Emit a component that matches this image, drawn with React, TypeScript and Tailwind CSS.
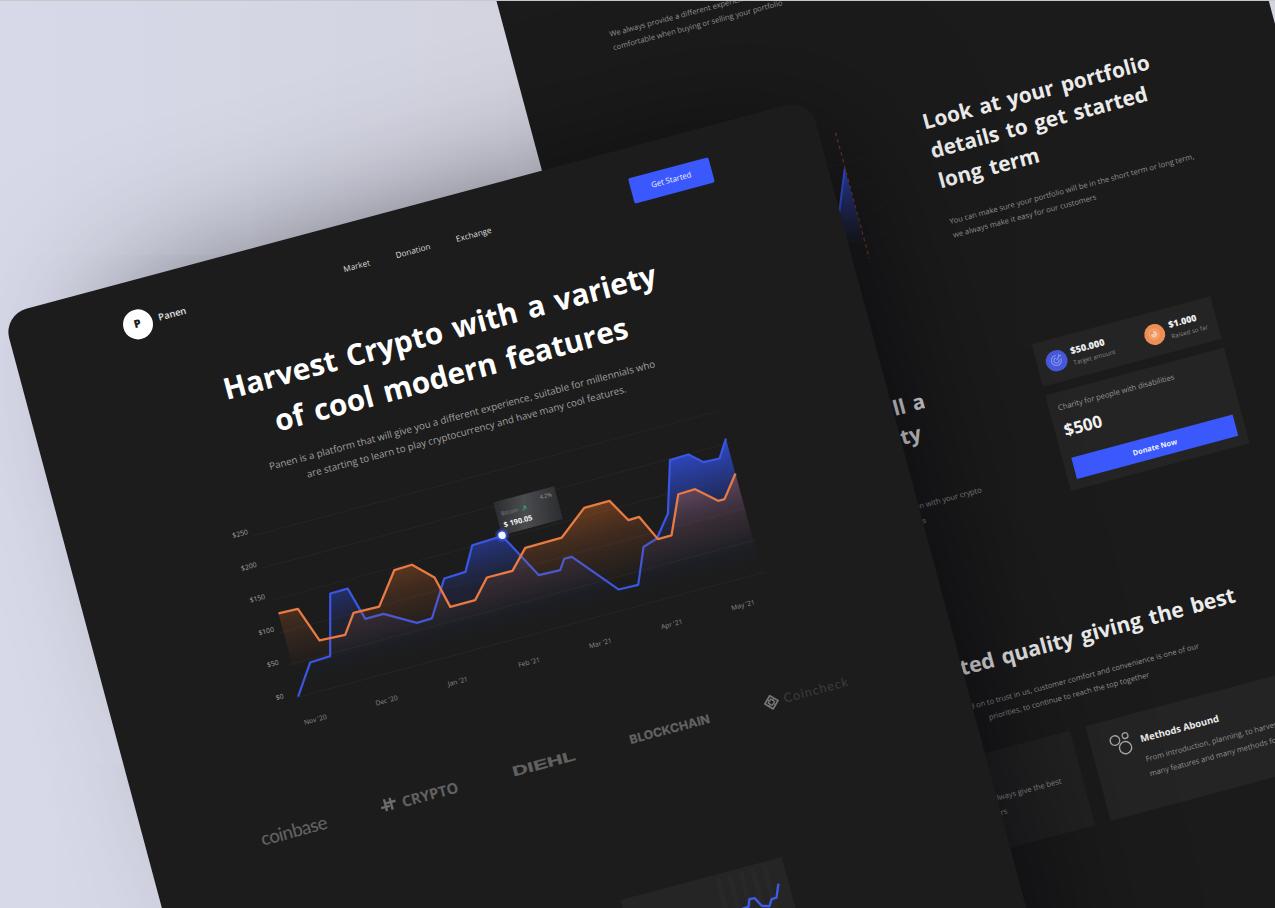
import React from 'react';

type Point = [number, number];

const BITCOIN: Point[] = [
  [2.3, 167], [22.8, 137.1], [43.7, 136.2], [60, 75.7], [78.2, 75.5], [87.3, 109.3], [106.2, 109.2],
  [136.1, 126.5], [151.8, 126.1], [174, 90.7], [196.2, 89.8], [209.7, 65.8], [241, 64.6], [266.3, 112],
  [288.2, 112.7], [295.1, 102.7], [302.9, 102.9], [339.5, 146.4], [359.7, 147.1], [374.7, 111.8],
  [389.8, 107.1], [406.9, 85.8], [422.7, 34.8], [442, 34.1], [454.5, 45.4], [471, 46.1], [482.3, 28.5],
];

const ETHEREUM: Point[] = [
  [4.9, 81.6], [24.8, 82.1], [37.5, 118.3], [63.7, 119.6], [77.5, 100.4], [103.9, 101], [127.9, 69.8],
  [146.4, 69.1], [164.9, 87.2], [172.5, 119.7], [198.3, 119.6], [215.5, 100.8], [241.9, 101],
  [260.2, 82.1], [298.2, 81.6], [327.5, 58.7], [353.7, 58.5], [367.1, 82.1], [378.3, 81.7],
  [390.6, 108], [404.7, 107.9], [421.9, 69.9], [439.5, 69.4], [458.7, 86.6], [465.3, 86.6], [482.5, 64.7],
];

const Y_LABELS = ['$250', '$200', '$150', '$100', '$50', '$0'];
const X_LABELS = ["Nov '20", "Dec '20", "Jan '21", "Feb '21", "Mar '21", "Apr '21", "May '21"];

const toLine = (points: Point[]) => points.map((p) => p.join(',')).join(' ');
const toArea = (points: Point[], floor: number) =>
  `${points[0][0]},${floor} ${toLine(points)} ${points[points.length - 1][0]},${floor}`;

function HeroChart() {
  return (
    <svg className="block overflow-visible" width="485" height="168" viewBox="0 0 485 168" fill="none">
      <defs>
        <linearGradient id="blueArea" gradientUnits="userSpaceOnUse" x1="0" y1="25" x2="0" y2="158">
          <stop offset="0" stopColor="#3355f0" stopOpacity="0.85" />
          <stop offset="0.35" stopColor="#2c49cf" stopOpacity="0.48" />
          <stop offset="0.6" stopColor="#2a41a8" stopOpacity="0.18" />
          <stop offset="1" stopColor="#2a3f9d" stopOpacity="0" />
        </linearGradient>
        <linearGradient id="orangeArea" gradientUnits="userSpaceOnUse" x1="0" y1="50" x2="0" y2="140">
          <stop offset="0" stopColor="#d8691f" stopOpacity="0.46" />
          <stop offset="0.45" stopColor="#cf6526" stopOpacity="0.2" />
          <stop offset="1" stopColor="#c8642a" stopOpacity="0" />
        </linearGradient>
      </defs>
      {[0, 33.5, 67, 100.5, 134, 167.5].map((y) => (
        <line key={y} x1="0" y1={y} x2="485" y2={y} stroke="#252525" strokeWidth="1" />
      ))}
      <polygon points={toArea(BITCOIN, 160)} fill="url(#blueArea)" />
      <polyline points={toLine(BITCOIN)} stroke="#3b56e2" strokeWidth="2.2" strokeLinejoin="round" />
      <polygon points={toArea(ETHEREUM, 146)} fill="url(#orangeArea)" />
      <polyline points={toLine(ETHEREUM)} stroke="#e87a42" strokeWidth="2.3" strokeLinejoin="round" />
    </svg>
  );
}

function Tooltip() {
  return (
    <div className="absolute top-[30.5px] left-[241px] h-[33.5px] w-[63px] bg-linear-100 from-[#2b2c2f] via-[#4b4c50] via-45% to-[#2c2d2f]">
      <div className="flex h-full flex-col pl-[5px]">
        <span className="pt-[4px] pr-[4px] text-right text-[5.5px] leading-[7px] text-[#a0a0a4]">4.2%</span>
        <span className="flex items-center gap-[4px] text-[5.5px] leading-[5px] text-[#85858a]">
          Bitcoin
          <svg width="5" height="5" viewBox="0 0 6 6" fill="none" stroke="#2fa566" strokeWidth="1.2">
            <path d="M0.8 5.2 5 1M1.6 1H5v3.4" />
          </svg>
        </span>
        <span className="pt-[2px] text-[7.4px] leading-[12px] font-bold text-[#f2f2f2]">$ 190.05</span>
      </div>
      <svg className="absolute -bottom-[8px] -left-[8px]" width="16" height="16" viewBox="0 0 16 16">
        <circle cx="8" cy="8" r="7" fill="#3a5bff" opacity="0.28" />
        <circle cx="8" cy="8" r="5.4" fill="#3a5bff" opacity="0.65" />
        <circle cx="8" cy="8" r="3.7" fill="#f4f6ff" />
      </svg>
    </div>
  );
}

function Partners() {
  return (
    <div className="mr-[113px] ml-[113.5px] mt-[85.5px] flex h-[20px] items-center justify-between text-[#616161]">
      <span className="font-['Lato',sans-serif] text-[18.8px] leading-[20px] font-medium tracking-[-0.65px]">coinbase</span>
      <span className="flex items-center gap-[5px]">
        <svg width="17" height="13" viewBox="0 0 17 13" fill="none" stroke="#6c6c6c" strokeWidth="2.4">
          <path d="M5.6 0.4v12.2M11.4 0.4v12.2M0.6 8.2h9M7 4.8h9.4" />
        </svg>
        <span className="text-[14.8px] leading-[20px] font-bold">CRYPTO</span>
      </span>
      <span className="block w-[65px]">
        <span className="block w-[41px] origin-left scale-x-[1.55] font-['Liberation_Sans',sans-serif] text-[13.9px] leading-[20px] font-bold [-webkit-text-stroke:0.3px_#616161]">
          DIEHL
        </span>
      </span>
      <span className="font-['Inter',sans-serif] text-[12.3px] leading-[20px] font-extrabold">BLOCKCHAIN</span>
      <span className="flex items-center gap-[4.5px]">
        <svg width="16" height="16" viewBox="0 0 16 16" fill="none" stroke="#747474" strokeWidth="1.8">
          <path d="M8 1.2 14.8 8 8 14.8 1.2 8Z" strokeLinejoin="round" />
          <path d="M8 4.8 11.2 8 8 11.2 4.8 8Z" strokeWidth="1.4" />
          <path d="M4.6 4.6 6.4 6.4M11.4 4.6 9.6 6.4M4.6 11.4l1.8-1.8M11.4 11.4 9.6 9.6" strokeWidth="1.3" />
        </svg>
        <span className="font-['Lato',sans-serif] text-[12.6px] leading-[20px] tracking-[1.05px] text-[#3c3c3c]">Coincheck</span>
      </span>
    </div>
  );
}

function LandingPage() {
  return (
    <div className="absolute top-[315.3px] left-[2.9px] h-[1300px] w-[835px] origin-top-left -rotate-15 rounded-t-[24px] bg-[#1c1c1c] shadow-[50px_-22px_150px_-56px_rgba(0,0,10,0.7)]">
      <header className="mr-[113px] ml-[112.5px] grid grid-cols-[1fr_auto_1fr] items-center pt-[28.5px]">
        <div className="flex items-center gap-[7px]">
          <span className="flex size-[30px] items-center justify-center rounded-full bg-white text-[11px] font-extrabold text-[#1c1c1c]">P</span>
          <span className="text-[9.4px] font-semibold text-[#e4e4e4]">Panen</span>
        </div>
        <nav className="flex gap-[27px] pt-px text-[8.2px] font-medium text-[#dedede]">
          <a>Market</a>
          <a>Donation</a>
          <a>Exchange</a>
        </nav>
        <button className="mb-[2px] h-[26px] w-[83px] justify-self-end rounded-[2px] bg-[#3a58fb] text-[7.8px] font-medium text-[#eef0ff]">Get Started</button>
      </header>

      <h1 className="mt-[48px] text-center text-[29.7px] leading-[44.2px] font-bold [word-spacing:2.8px] text-white">
        Harvest Crypto with a variety
        <br />
        of cool modern features
      </h1>
      <p className="mt-[13.4px] text-center text-[9.76px] leading-[16.8px] text-[#a0a0a0]">
        Panen is a platform that will give you a different experience, suitable for millennials who
        <br />
        are starting to learn to play cryptocurrency and have many cool features.
      </p>

      <div className="mt-[13.6px] flex pl-[164.5px]">
        <div className="w-[19px] pt-px text-[6.9px] font-medium text-[#a6a6a6]">
          {Y_LABELS.map((label) => (
            <div key={label} className="flex h-[33.6px] items-center">{label}</div>
          ))}
        </div>
        <div className="relative mt-[22.3px]">
          <HeroChart />
          <Tooltip />
        </div>
      </div>
      <div className="mt-[9px] ml-[160px] grid w-[516.6px] grid-cols-7 text-center text-[6.7px] leading-[10px] font-medium text-[#8c8c8c]">
        {X_LABELS.map((label) => (
          <span key={label}>{label}</span>
        ))}
      </div>

      <Partners />

      <div className="mt-[142.5px] ml-[444.6px] h-[240px] w-[167px] bg-[#252525]">
        <svg width="167" height="120" viewBox="0 0 167 120" fill="none">
          {[97, 109, 121, 133, 145].map((x) => (
            <rect key={x} x={x} y="3" width="5" height="117" fill="#282828" />
          ))}
          <polyline
            points="108,42 114,40 122,39.5 124.8,32.5 130,32.8 135,42 142.3,44.5 146.2,38.2 151.4,38 156.8,25"
            stroke="#3f5be6"
            strokeWidth="2.4"
            strokeLinejoin="round"
          />
        </svg>
      </div>
    </div>
  );
}

function PortfolioChart() {
  return (
    <svg className="shrink-0" width="240" height="140" viewBox="0 0 240 140" fill="none">
      <defs>
        <linearGradient id="portfolioArea" gradientUnits="userSpaceOnUse" x1="0" y1="40" x2="0" y2="116">
          <stop offset="0" stopColor="#2f4ddb" stopOpacity="0.85" />
          <stop offset="1" stopColor="#2a3f9d" stopOpacity="0" />
        </linearGradient>
      </defs>
      {[34.4, 60, 87, 112].map((y) => (
        <line key={y} x1="0" y1={y} x2="221" y2={y} stroke="#212121" strokeWidth="1" />
      ))}
      <polygon points="150,116 150,90 175.7,80 192,40 192,116" fill="url(#portfolioArea)" />
      <polyline points="150,90 175.7,80 192,40" stroke="#3450da" strokeWidth="2" />
      <line x1="192.5" y1="3" x2="192.5" y2="133" stroke="#74392a" strokeWidth="1.2" strokeDasharray="3.4 3.4" />
    </svg>
  );
}

function DonationCards() {
  return (
    <div className="flex w-[185.5px] shrink-0 flex-col gap-[8.5px]">
      <div className="flex h-[44px] items-center bg-[#242424] pl-[9.5px]">
        <span className="flex size-[21.5px] items-center justify-center rounded-full bg-[#4558d8]">
          <svg width="14" height="14" viewBox="0 0 14 14" fill="none" stroke="#8b98ee" strokeWidth="1.1">
            <path d="M11.6 6.2A5 5 0 1 1 7.6 2.2M9.4 6.8A2.6 2.6 0 1 1 7 4.6M7 7l4-4M10.4 1.4V3.6h2.2" />
          </svg>
        </span>
        <span className="ml-[5px] flex w-[75px] flex-col">
          <b className="text-[9.3px] leading-[12px] font-extrabold text-[#ededed]">$50.000</b>
          <span className="text-[6.3px] leading-[11px] text-[#858585]">Target amount</span>
        </span>
        <span className="flex size-[21.5px] items-center justify-center rounded-full bg-[#ee8e56]">
          <svg width="14" height="14" viewBox="0 0 14 14" fill="none" stroke="#f8c4a3" strokeWidth="1.2">
            <circle cx="7" cy="7" r="5" stroke="#f3a878" />
            <path d="M7 4.4A2.7 2.7 0 1 1 4.3 7.2L7 7Z" fill="#f8c4a3" />
          </svg>
        </span>
        <span className="ml-[5px] flex flex-col">
          <b className="text-[9px] leading-[12px] font-extrabold text-[#ededed]">$1.000</b>
          <span className="text-[6.3px] leading-[11px] text-[#858585]">Raised so far</span>
        </span>
      </div>
      <div className="flex h-[99px] flex-col bg-[#242424] px-[9.5px] pt-[8.5px]">
        <span className="text-[7.6px] leading-[14px] text-[#989898]">Charity for people with disabilities</span>
        <span className="mt-[4px] text-[17px] leading-[26px] font-bold text-[#f2f2f2]">$500</span>
        <button className="mt-[14.5px] h-[22.5px] w-full bg-[#3a58fb] text-[7.4px] font-bold text-[#eef0ff]">Donate Now</button>
      </div>
    </div>
  );
}

function DetailsPage() {
  return (
    <div className="absolute top-[-27.5px] left-[489px] h-[1250px] w-[745.5px] origin-top-left -rotate-15 bg-[#1b1b1b] pl-[100.5px] whitespace-nowrap">
      <p className="pt-[82.6px] text-[7.6px] leading-[14.4px] text-[#959595]">
        We always provide a different experience to make you
        <br />
        comfortable when buying or selling your portfolio
      </p>

      <section className="mt-[129.2px] flex gap-[40px]">
        <PortfolioChart />
        <div>
          <h2 className="text-[20.9px] leading-[30.5px] font-bold [word-spacing:2px] text-[#ebebeb]">
            Look at your portfolio
            <br />
            details to get started
            <br />
            long term
          </h2>
          <p className="mt-[19.6px] text-[7.63px] leading-[14.4px] text-[#919191]">
            You can make sure your portfolio will be in the short term or long term,
            <br />
            we always make it easy for our customers
          </p>
        </div>
      </section>

      <section className="mt-[118.9px] flex justify-start">
        <div className="flex w-[241.5px] flex-col items-end pt-[10.5px]">
          <h2 className="mr-[32px] text-right text-[20.7px] leading-[30.5px] font-bold [word-spacing:2px] text-[#e2e2e2]">
            Donate to all a
            <br />
            <span className="mr-[12px]">charity</span>
          </h2>
          <p className="mt-[48px] text-right text-[7.6px] leading-[14.6px] text-[#919191]">
            You can make a donation with your crypto
            <br />
            <span className="mr-[61.5px]">assets</span>
          </p>
        </div>
        <div className="ml-[85.7px]">
          <DonationCards />
        </div>
      </section>

      <section className="mt-[127px]">
        <h2 className="w-[459px] text-right text-[21.2px] leading-[30.5px] font-bold [word-spacing:2.2px] text-[#ebebeb]">
          The trusted quality giving the best
        </h2>
        <div className="mt-[17.3px] text-[7.55px] leading-[14.9px] text-[#919191]">
          <p className="w-[411px] text-right">
            We are relied on to trust in us, customer comfort and convenience is one of our
          </p>
          <p className="w-[355.5px] text-right">priorities, to continue to reach the top together</p>
        </div>
        <div className="mt-[26.4px] flex gap-[15.5px]">
          <article className="h-[98px] w-[264.5px] bg-[#222] pt-[19.5px] pl-[49px]">
            <h3 className="text-[9.5px] leading-[14px] font-bold text-[#ebebeb]">Best Service</h3>
            <div className="mt-[5.9px] text-[7.6px] leading-[14.9px] text-[#919191]">
              <p className="w-[194px] text-right">From the very first day we always give the best</p>
              <p className="w-[134px] text-right">for all of our customers</p>
            </div>
          </article>
          <article className="flex h-[98px] w-[264.5px] bg-[#242424] pt-[15.5px] pl-[19px]">
            <svg className="shrink-0" width="24" height="24" viewBox="0 0 24 24" fill="none" stroke="#a6a6a6" strokeWidth="1.3">
              <circle cx="6" cy="6.4" r="4.8" />
              <circle cx="17" cy="4.2" r="2.9" />
              <circle cx="14.4" cy="16" r="6.1" />
            </svg>
            <div className="pt-[4.4px] pl-[7.5px]">
              <h3 className="text-[9.5px] leading-[14px] font-bold text-[#ebebeb]">Methods Abound</h3>
              <p className="mt-[5.9px] text-[7.6px] leading-[14.9px] text-[#919191]">
                From introduction, planning, to harvest we have
                <br />
                many features and many methods for you
              </p>
            </div>
          </article>
        </div>
      </section>
    </div>
  );
}

export default function App() {
  return (
    <main className="relative h-[908px] w-[1275px] overflow-hidden bg-linear-to-r from-[#d7d9e9] to-[#d2d3de] to-45% font-['Open_Sans',sans-serif]">
      <DetailsPage />
      <LandingPage />
      <div className="absolute inset-x-0 top-0 h-px bg-[#c4c9c9]" />
    </main>
  );
}
